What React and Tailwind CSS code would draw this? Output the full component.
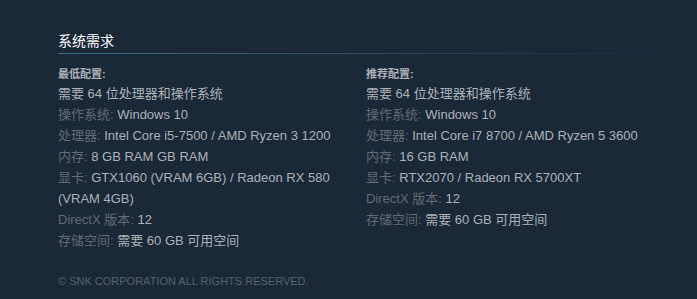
import React from "react";

const minReq = [
  ["操作系统:", "Windows 10"],
  ["处理器:", "Intel Core i5-7500 / AMD Ryzen 3 1200"],
  ["内存:", "8 GB RAM GB RAM"],
  ["显卡:", "GTX1060 (VRAM 6GB) / Radeon RX 580 (VRAM 4GB)"],
  ["DirectX 版本:", "12"],
  ["存储空间:", "需要 60 GB 可用空间"],
];

const recReq = [
  ["操作系统:", "Windows 10"],
  ["处理器:", "Intel Core i7 8700 / AMD Ryzen 5 3600"],
  ["内存:", "16 GB RAM"],
  ["显卡:", "RTX2070 / Radeon RX 5700XT"],
  ["DirectX 版本:", "12"],
  ["存储空间:", "需要 60 GB 可用空间"],
];

function Col({ title, items }) {
  return (
    <div className="w-[308px] pr-[22px]">
      <div className="text-[11px] leading-[15px] font-bold text-[#acb2b8]">{title}</div>
      <ul className="mt-px text-[13px] leading-[21px] text-[#acb2b8]">
        <li>需要 64 位处理器和操作系统</li>
        {items.map(([k, v]) => (
          <li key={k}>
            <span className="text-[#626b74]">{k}</span> {v}
          </li>
        ))}
      </ul>
    </div>
  );
}

export default function App() {
  return (
    <div
      className="w-full h-[299px] bg-[#1b2838] overflow-hidden"
      style={{ fontFamily: '"Liberation Sans", Arial, "Noto Sans CJK SC", sans-serif' }}
    >
      <div className="ml-[58px] w-[616px] pt-[32px]">
        <h2 className="text-[14px] leading-[18px] text-white pb-[3px]">系统需求</h2>
        <div className="h-px bg-gradient-to-r from-[#3b6e8c] to-transparent" />
        <div className="flex mt-[13px]">
          <Col title="最低配置:" items={minReq} />
          <Col title="推荐配置:" items={recReq} />
        </div>
        <div className="mt-[23px] text-[11px] leading-[14px] text-[#56646f]">
          © SNK CORPORATION ALL RIGHTS RESERVED.
        </div>
      </div>
    </div>
  );
}
